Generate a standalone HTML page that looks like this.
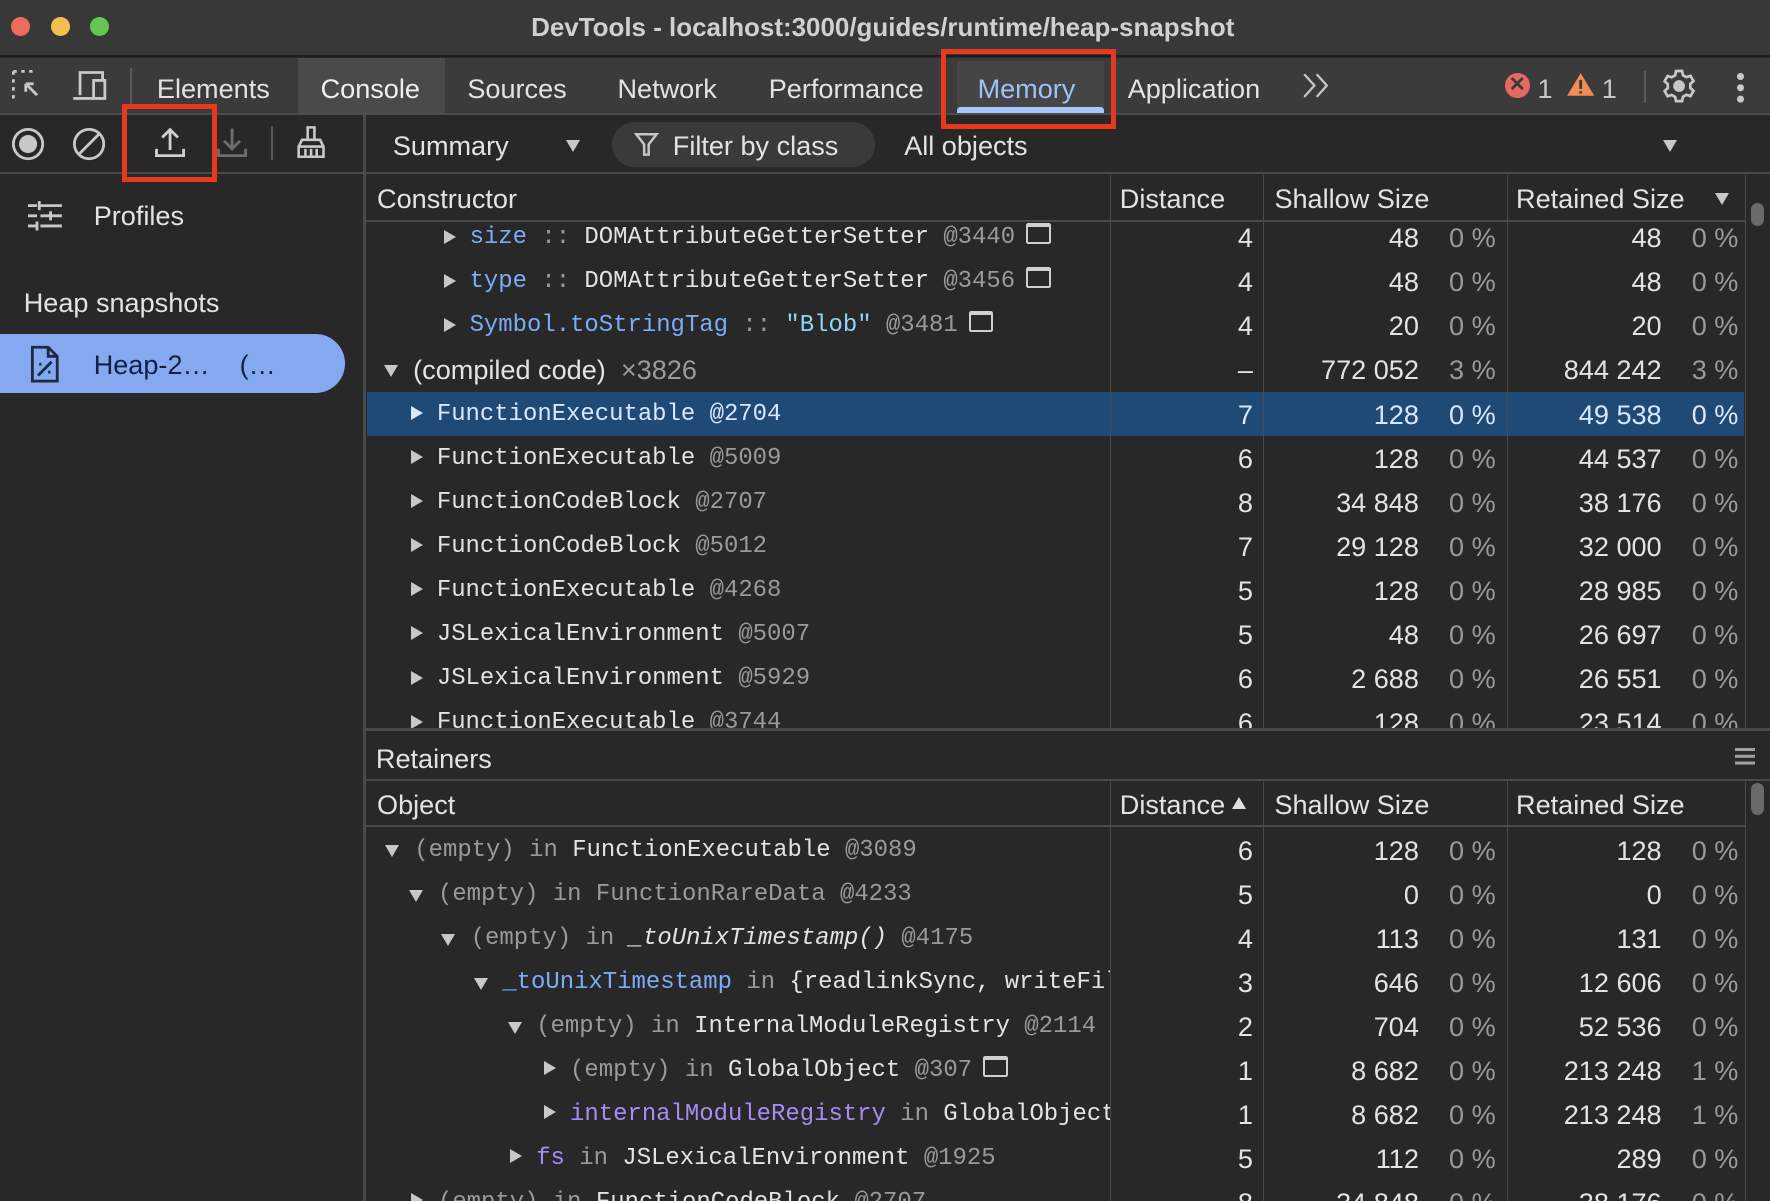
<!DOCTYPE html>
<html><head><meta charset="utf-8">
<style>
html,body{margin:0;padding:0;background:#282828;overflow:hidden;width:1770px;height:1201px}
#root{position:relative;width:1568px;height:1064px;zoom:1.12883;background:#282828;font-family:"Liberation Sans",sans-serif;color:#e3e3e3;overflow:hidden}
.a{position:absolute;white-space:nowrap}
.ui{font-size:24px;line-height:39px;margin-top:2px}
.mono{font-family:"Liberation Mono",monospace;font-size:21.2px;line-height:39px;margin-top:2px}
.g{color:#9a9a9a}
.bl{color:#7cacf8}
.cy{color:#8fd3f5}
.pu{color:#a88bf5}
.r{text-align:right}
.tri{position:absolute;width:0;height:0}
.tr{border-top:7px solid transparent;border-bottom:7px solid transparent;border-left:11px solid #c8c8c8}
.td{border-left:7px solid transparent;border-right:7px solid transparent;border-top:11px solid #c8c8c8}
.vl{position:absolute;width:1px;background:#4a4a4a}
.box{display:inline-block;width:18px;height:13px;border:2px solid #d0d0d0;border-top-width:4px;border-radius:2px;vertical-align:-1px;margin-left:10px}
</style></head><body><div id="root">

<!-- title bar -->
<div class="a" style="left:0;top:0;width:1568px;height:49px;background:#383838;border-bottom:2px solid #1e1e1e"></div>
<div class="a" style="left:10px;top:15px;width:17px;height:17px;border-radius:50%;background:#ee6a5f"></div>
<div class="a" style="left:45px;top:15px;width:17px;height:17px;border-radius:50%;background:#f5be4f"></div>
<div class="a" style="left:80px;top:15px;width:17px;height:17px;border-radius:50%;background:#62c554"></div>
<div class="a" style="left:0;width:1564px;top:11px;text-align:center;font-size:23px;font-weight:bold;color:#d0d0d0">DevTools - localhost:3000/guides/runtime/heap-snapshot</div>

<!-- tab bar -->
<div class="a" style="left:0;top:51px;width:1568px;height:49px;background:#3b3b3b;border-bottom:2px solid #4d4d4d"></div>
<div class="a" style="left:264px;top:51px;width:130px;height:49px;background:#4a4a4a"></div>
<svg class="a" style="left:9px;top:60px" width="32" height="32" viewBox="0 0 32 32" fill="none" stroke="#c8c8c8" stroke-width="2.5"><path d="M3 3h3M10 3h3M17 3h3M3 3v3M3 10v3M3 17v3M3 24v3M14 14l10 10M14 14h7M14 14v7"/></svg>
<svg class="a" style="left:63px;top:60px" width="34" height="32" viewBox="0 0 34 32" fill="none" stroke="#c8c8c8" stroke-width="2.5"><path d="M8 24V4h20v6M2 27h18M20 11h10v16H20z"/></svg>
<div class="a" style="left:115px;top:60px;width:2px;height:32px;background:#5a5a5a"></div>
<div class="a ui" style="left:139px;top:57px;color:#e3e3e3">Elements</div>
<div class="a ui" style="left:284px;top:57px;color:#f0f0f0">Console</div>
<div class="a ui" style="left:414px;top:57px">Sources</div>
<div class="a ui" style="left:547px;top:57px">Network</div>
<div class="a ui" style="left:681px;top:57px">Performance</div>
<div class="a" style="left:848px;top:54px;width:130px;height:46px;background:#454545"></div>
<div class="a ui" style="left:866px;top:57px;color:#9ec1fa">Memory</div>
<div class="a" style="left:848px;top:95px;width:130px;height:5px;background:#a8c7fa;border-radius:3px 3px 0 0"></div>
<div class="a ui" style="left:999px;top:57px">Application</div>
<svg class="a" style="left:1153px;top:64px" width="26" height="24" fill="none" stroke="#c8c8c8" stroke-width="2"><path d="M2 2l9 10-9 10M13 2l9 10-9 10"/></svg>
<div class="a" style="left:1333px;top:65px;width:22px;height:22px;border-radius:50%;background:#e46962;color:#3b3b3b;font-size:18px;line-height:22px;text-align:center;font-weight:bold">✕</div>
<div class="a ui" style="left:1362px;top:57px;color:#c8c8c8">1</div>
<svg class="a" style="left:1387px;top:64px" width="26" height="22" viewBox="0 0 26 22"><path d="M13 1L25 21H1z" fill="#f28b54"/><path d="M13 7v8M13 17v2" stroke="#3b3b3b" stroke-width="2.5"/></svg>
<div class="a ui" style="left:1419px;top:57px;color:#c8c8c8">1</div>
<div class="a" style="left:1456px;top:63px;width:2px;height:28px;background:#5a5a5a"></div>
<svg class="a" style="left:1471px;top:60px" width="32" height="32" viewBox="0 0 24 24" fill="none" stroke="#c8c8c8" stroke-width="1.8"><path d="M10 2h4l.6 2.8 2.3 1.3 2.7-.9 2 3.5-2.1 1.9v2.7l2.1 1.9-2 3.5-2.7-.9-2.3 1.3L14 22h-4l-.6-2.8-2.3-1.3-2.7.9-2-3.5 2.1-1.9v-2.7L2.4 8.8l2-3.5 2.7.9 2.3-1.3z"/><circle cx="12" cy="12" r="3" fill="#c8c8c8"/></svg>
<div class="a" style="left:1539px;top:65px;width:6px;height:6px;border-radius:50%;background:#c8c8c8;box-shadow:0 10px 0 #c8c8c8,0 20px 0 #c8c8c8"></div>

<!-- toolbar -->
<div class="a" style="left:0;top:102px;width:1568px;height:50px;background:#282828;border-bottom:2px solid #4a4a4a"></div>
<svg class="a" style="left:9px;top:112px" width="32" height="32"><circle cx="16" cy="16" r="13" fill="none" stroke="#c8c8c8" stroke-width="2.5"/><circle cx="16" cy="16" r="8" fill="#c8c8c8"/></svg>
<svg class="a" style="left:63px;top:112px" width="32" height="32" fill="none" stroke="#c8c8c8" stroke-width="2.5"><circle cx="16" cy="16" r="13"/><path d="M7 25L25 7"/></svg>
<svg class="a" style="left:135px;top:110px" width="32" height="32" fill="none" stroke="#d0d0d0" stroke-width="2.5"><path d="M16 23V5M9 12l7-7 7 7M4 22v6h24v-6"/></svg>
<svg class="a" style="left:190px;top:110px" width="32" height="32" fill="none" stroke="#6e6e6e" stroke-width="2.5"><path d="M16 4v18M9 15l7 7 7-7M4 22v6h24v-6"/></svg>
<div class="a" style="left:240px;top:112px;width:2px;height:30px;background:#5a5a5a"></div>
<svg class="a" style="left:260px;top:110px" width="32" height="34" fill="none" stroke="#c8c8c8" stroke-width="2.3"><path d="M13 3h6v11h-6zM8 14h16l3 6v9H5v-9zM5 20h22M11 22v7M16 22v7M21 22v7"/></svg>
<div class="a" style="left:322px;top:102px;width:2px;height:962px;background:#4a4a4a"></div>
<div class="a ui" style="left:348px;top:108px">Summary</div>
<div class="tri td" style="left:501px;top:124px"></div>
<div class="a" style="left:542px;top:108px;width:233px;height:40px;border-radius:20px;background:#3a3a3a"></div>
<svg class="a" style="left:562px;top:117px" width="22" height="22" fill="none" stroke="#c8c8c8" stroke-width="2.2"><path d="M2 2h18l-7 9v9h-4v-9z"/></svg>
<div class="a ui" style="left:596px;top:108px">Filter by class</div>
<div class="a ui" style="left:801px;top:108px">All objects</div>
<div class="tri td" style="left:1473px;top:124px"></div>

<!-- red boxes -->
<div class="a" style="left:834px;top:43px;width:146px;height:62px;border:5px solid #e8391f"></div>
<div class="a" style="left:108px;top:92px;width:75px;height:60px;border:5px solid #e8391f"></div>

<!-- sidebar -->
<svg class="a" style="left:25px;top:177px" width="30" height="28" fill="none" stroke="#c8c8c8" stroke-width="2.5"><path d="M0 5h30M0 14h30M0 23h30" stroke-dasharray="8 3 19"/><path d="M10 1v8M20 10v8M8 19v8"/></svg>
<div class="a ui" style="left:83px;top:170px">Profiles</div>
<div class="a ui" style="left:21px;top:247px">Heap snapshots</div>
<div class="a" style="left:0;top:296px;width:306px;height:52px;background:#85a9f0;border-radius:0 26px 26px 0"></div>
<svg class="a" style="left:26px;top:306px" width="28" height="34" fill="none" stroke="#1c2a44" stroke-width="2.5"><path d="M3 2h14l8 8v22H3zM17 2v8h8M8 27l12-12M9 17h2M17 24h2"/></svg>
<div class="a ui" style="left:83px;top:302px;color:#132043">Heap-2…&nbsp;&nbsp;&nbsp;&nbsp;(…</div>

<!-- top grid -->
<div class="a" style="left:324px;top:155px;width:1222px;height:40px;background:#282828;border-bottom:2px solid #4a4a4a"></div>
<div class="a ui" style="left:334px;top:155px">Constructor</div>
<div class="a ui" style="left:992px;top:155px">Distance</div>
<div class="a ui" style="left:1129px;top:155px">Shallow Size</div>
<div class="a ui" style="left:1343px;top:155px">Retained Size</div>
<div class="tri td" style="left:1519px;top:171px"></div>
<div class="a" style="left:325px;top:347px;width:1220px;height:39px;background:#1f4a75"></div>

<div class="vl" style="left:983px;top:155px;height:490px"></div>
<div class="vl" style="left:1119px;top:155px;height:490px"></div>
<div class="vl" style="left:1335px;top:155px;height:490px"></div>
<div class="vl" style="left:1546px;top:155px;height:490px"></div>
<div class="a" style="left:1551px;top:180px;width:12px;height:20px;border-radius:6px;background:#6a6a6a"></div>

<!-- splitter / retainers -->
<div class="a" style="left:324px;top:645px;width:1244px;height:3px;background:#4a4a4a"></div>
<div class="a" style="left:324px;top:648px;width:1244px;height:42px;background:#282828;border-bottom:2px solid #4a4a4a"></div>
<div class="a ui" style="left:333px;top:651px">Retainers</div>
<div class="a" style="left:1537px;top:663px;width:18px;height:2px;background:#a0a0a0;box-shadow:0 6px 0 #a0a0a0,0 12px 0 #a0a0a0"></div>
<div class="a" style="left:324px;top:692px;width:1222px;height:39px;border-bottom:2px solid #4a4a4a"></div>
<div class="a ui" style="left:334px;top:692px">Object</div>
<div class="a ui" style="left:992px;top:692px">Distance</div>
<div class="tri" style="left:1091px;top:706px;border-left:7px solid transparent;border-right:7px solid transparent;border-bottom:11px solid #e0e0e0"></div>
<div class="a ui" style="left:1129px;top:692px">Shallow Size</div>
<div class="a ui" style="left:1343px;top:692px">Retained Size</div>
<div class="vl" style="left:983px;top:692px;height:372px"></div>
<div class="vl" style="left:1119px;top:692px;height:372px"></div>
<div class="vl" style="left:1335px;top:692px;height:372px"></div>
<div class="vl" style="left:1546px;top:692px;height:372px"></div>
<div class="a" style="left:1551px;top:694px;width:12px;height:28px;border-radius:6px;background:#6a6a6a"></div>

<!-- top rows -->
<div style="position:absolute;left:324px;top:197px;width:659px;height:448px;overflow:hidden">
<div class="tri tr" style="left:69px;top:7px"></div>
<div class="a mono" style="left:92px;top:-8px"><span class="bl">size</span> <span class="g">::</span> DOMAttributeGetterSetter <span class="g">@3440</span><span class="box"></span></div>
<div class="tri tr" style="left:69px;top:46px"></div>
<div class="a mono" style="left:92px;top:31px"><span class="bl">type</span> <span class="g">::</span> DOMAttributeGetterSetter <span class="g">@3456</span><span class="box"></span></div>
<div class="tri tr" style="left:69px;top:85px"></div>
<div class="a mono" style="left:92px;top:70px"><span class="bl">Symbol.toStringTag</span> <span class="g">::</span> <span class="cy">"Blob"</span> <span class="g">@3481</span><span class="box"></span></div>
<div class="tri td" style="left:16px;top:126px"></div>
<div class="a ui" style="left:42px;top:109px">(compiled code) &nbsp;<span class="g">×3826</span></div>
<div class="tri tr" style="left:40px;top:163px;border-left-color:#d8e8ff"></div>
<div class="a mono" style="left:63px;top:149px;color:#d8e8ff">FunctionExecutable @2704</div>
<div class="tri tr" style="left:40px;top:202px"></div>
<div class="a mono" style="left:63px;top:188px">FunctionExecutable <span class="g">@5009</span></div>
<div class="tri tr" style="left:40px;top:241px"></div>
<div class="a mono" style="left:63px;top:227px">FunctionCodeBlock <span class="g">@2707</span></div>
<div class="tri tr" style="left:40px;top:280px"></div>
<div class="a mono" style="left:63px;top:266px">FunctionCodeBlock <span class="g">@5012</span></div>
<div class="tri tr" style="left:40px;top:319px"></div>
<div class="a mono" style="left:63px;top:305px">FunctionExecutable <span class="g">@4268</span></div>
<div class="tri tr" style="left:40px;top:358px"></div>
<div class="a mono" style="left:63px;top:344px">JSLexicalEnvironment <span class="g">@5007</span></div>
<div class="tri tr" style="left:40px;top:397px"></div>
<div class="a mono" style="left:63px;top:383px">JSLexicalEnvironment <span class="g">@5929</span></div>
<div class="tri tr" style="left:40px;top:436px"></div>
<div class="a mono" style="left:63px;top:422px">FunctionExecutable <span class="g">@3744</span></div>
</div>

<div style="position:absolute;left:0;top:197px;width:1546px;height:448px;overflow:hidden"><div id="n1" style="position:absolute;left:0;top:-197px"></div></div>
<div style="position:absolute;left:0;top:733px;width:1546px;height:331px;overflow:hidden"><div id="n2" style="position:absolute;left:0;top:-733px"></div></div>
<script>
function nums(y,d,s,sp,r,rp,sel){
 var c=sel?'#d8e8ff':'#e3e3e3';
 return '<div class="a ui r" style="left:1000px;width:110px;top:'+y+'px;color:'+c+'">'+d+'</div>'+
 '<div class="a ui r" style="left:1130px;width:127px;top:'+y+'px;color:'+c+'">'+s+'</div>'+
 '<div class="a ui r" style="left:1265px;width:60px;top:'+y+'px;color:'+(sel?c:'#9a9a9a')+'">'+sp+'</div>'+
 '<div class="a ui r" style="left:1340px;width:132px;top:'+y+'px;color:'+c+'">'+r+'</div>'+
 '<div class="a ui r" style="left:1480px;width:60px;top:'+y+'px;color:'+(sel?c:'#9a9a9a')+'">'+rp+'</div>';}
var T1=[[189,'4','48','0 %','48','0 %'],[228,'4','48','0 %','48','0 %'],[267,'4','20','0 %','20','0 %'],[306,'–','772 052','3 %','844 242','3 %'],
[346,'7','128','0 %','49 538','0 %',1],[385,'6','128','0 %','44 537','0 %'],[424,'8','34 848','0 %','38 176','0 %'],[463,'7','29 128','0 %','32 000','0 %'],
[502,'5','128','0 %','28 985','0 %'],[541,'5','48','0 %','26 697','0 %'],[580,'6','2 688','0 %','26 551','0 %'],[619,'6','128','0 %','23 514','0 %']];
var T2=[[732,'6','128','0 %','128','0 %'],[771,'5','0','0 %','0','0 %'],[810,'4','113','0 %','131','0 %'],[849,'3','646','0 %','12 606','0 %'],
[888,'2','704','0 %','52 536','0 %'],[927,'1','8 682','0 %','213 248','1 %'],[966,'1','8 682','0 %','213 248','1 %'],[1005,'5','112','0 %','289','0 %'],[1044,'8','34 848','0 %','38 176','0 %']];
var h='';T1.forEach(function(t){h+=nums(t[0],t[1],t[2],t[3],t[4],t[5],t[6]);});document.getElementById('n1').innerHTML=h;
h='';T2.forEach(function(t){h+=nums(t[0],t[1],t[2],t[3],t[4],t[5],t[6]);});document.getElementById('n2').innerHTML=h;
</script>

<!-- retainer rows -->
<div style="position:absolute;left:324px;top:733px;width:659px;height:331px;overflow:hidden">
<div class="tri td" style="left:17px;top:16px"></div>
<div class="a mono" style="left:43px;top:-1px"><span class="g">(empty)</span> <span class="g">in</span> FunctionExecutable <span class="g">@3089</span></div>
<div class="tri td" style="left:38px;top:55px"></div>
<div class="a mono" style="left:64px;top:38px"><span class="g">(empty)</span> <span class="g">in</span> <span class="g">FunctionRareData</span> <span class="g">@4233</span></div>
<div class="tri td" style="left:67px;top:94px"></div>
<div class="a mono" style="left:93px;top:77px"><span class="g">(empty)</span> <span class="g">in</span> <i>_toUnixTimestamp()</i> <span class="g">@4175</span></div>
<div class="tri td" style="left:96px;top:133px"></div>
<div class="a mono" style="left:121px;top:116px"><span class="bl">_toUnixTimestamp</span> <span class="g">in</span> {readlinkSync, writeFileSync}</div>
<div class="tri td" style="left:126px;top:172px"></div>
<div class="a mono" style="left:151px;top:155px"><span class="g">(empty)</span> <span class="g">in</span> InternalModuleRegistry <span class="g">@2114</span></div>
<div class="tri tr" style="left:158px;top:207px"></div>
<div class="a mono" style="left:181px;top:194px"><span class="g">(empty)</span> <span class="g">in</span> GlobalObject <span class="g">@307</span><span class="box"></span></div>
<div class="tri tr" style="left:158px;top:246px"></div>
<div class="a mono" style="left:181px;top:233px"><span class="pu">internalModuleRegistry</span> <span class="g">in</span> GlobalObject</div>
<div class="tri tr" style="left:128px;top:285px"></div>
<div class="a mono" style="left:151px;top:272px"><span class="pu">fs</span> <span class="g">in</span> JSLexicalEnvironment <span class="g">@1925</span></div>
<div class="tri tr" style="left:40px;top:324px"></div>
<div class="a mono" style="left:64px;top:311px"><span class="g">(empty)</span> <span class="g">in</span> FunctionCodeBlock <span class="g">@2707</span></div>
</div>

</div></body></html>
